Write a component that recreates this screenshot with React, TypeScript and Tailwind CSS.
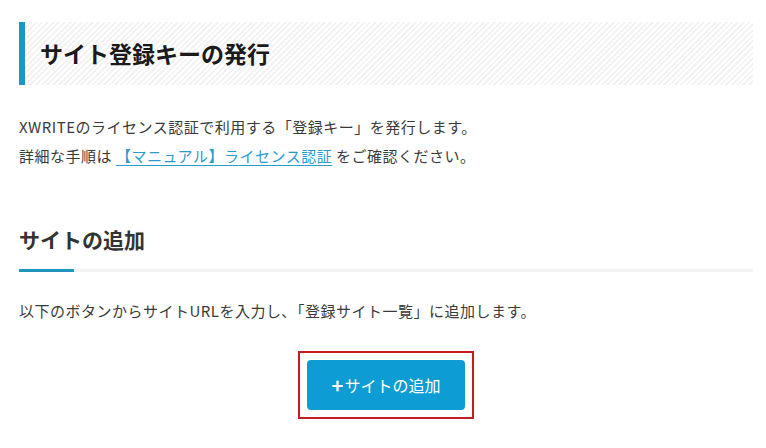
const font = "font-['Noto_Sans_CJK_JP','Noto_Sans',sans-serif]";

function SectionTitle({ children }: { children: string }) {
  return (
    <div className="mt-[54px]">
      <h3 className="pb-[15px] text-[21px] font-bold leading-[30px] text-[#333]">{children}</h3>
      <div className="h-[3px] bg-[#f2f2f2]">
        <div className="h-full w-[55px] bg-[#2196bd]" />
      </div>
    </div>
  );
}

export default function App() {
  return (
    <div className={`${font} min-h-[448px] bg-white pl-[19px] pr-[13px] pt-[22px] text-[#3a3a3a]`}>
      <h2 className="flex h-[63px] items-center border-l-[6px] border-[#1a97c4] bg-[image:repeating-linear-gradient(-45deg,#ffffff_0px,#ffffff_2px,#f3f3f3_2px,#f3f3f3_4px)] pl-[15px] text-[23px] font-bold text-[#1a1a1a]">
        サイト登録キーの発行
      </h2>

      <p className="mt-[27px] text-[15px] leading-[29px] tracking-[0.5px]">
        XWRITEのライセンス認証で利用する「登録キー」を発行します。
        <br />
        詳細な手順は{" "}
        <a href="#" className="text-[#2a9bcd] underline underline-offset-[3px]">
          【マニュアル】ライセンス認証
        </a>{" "}
        をご確認ください。
      </p>

      <SectionTitle>サイトの追加</SectionTitle>

      <p className="mt-[24px] text-[15px] leading-[29px] tracking-[0.5px]">
        以下のボタンからサイトURLを入力し､「登録サイト一覧」に追加します。
      </p>

      <div className="mt-[26px] flex justify-center">
        <div className="border-2 border-[#c71d22] p-[7px]">
          <button className="flex h-[50px] w-[158px] items-center justify-center rounded-[4px] bg-[#0d9cd4] text-[16px] text-white">
            <span className="mr-[1px] text-[20px] font-bold leading-none">+</span>
            サイトの追加
          </button>
        </div>
      </div>
    </div>
  );
}
